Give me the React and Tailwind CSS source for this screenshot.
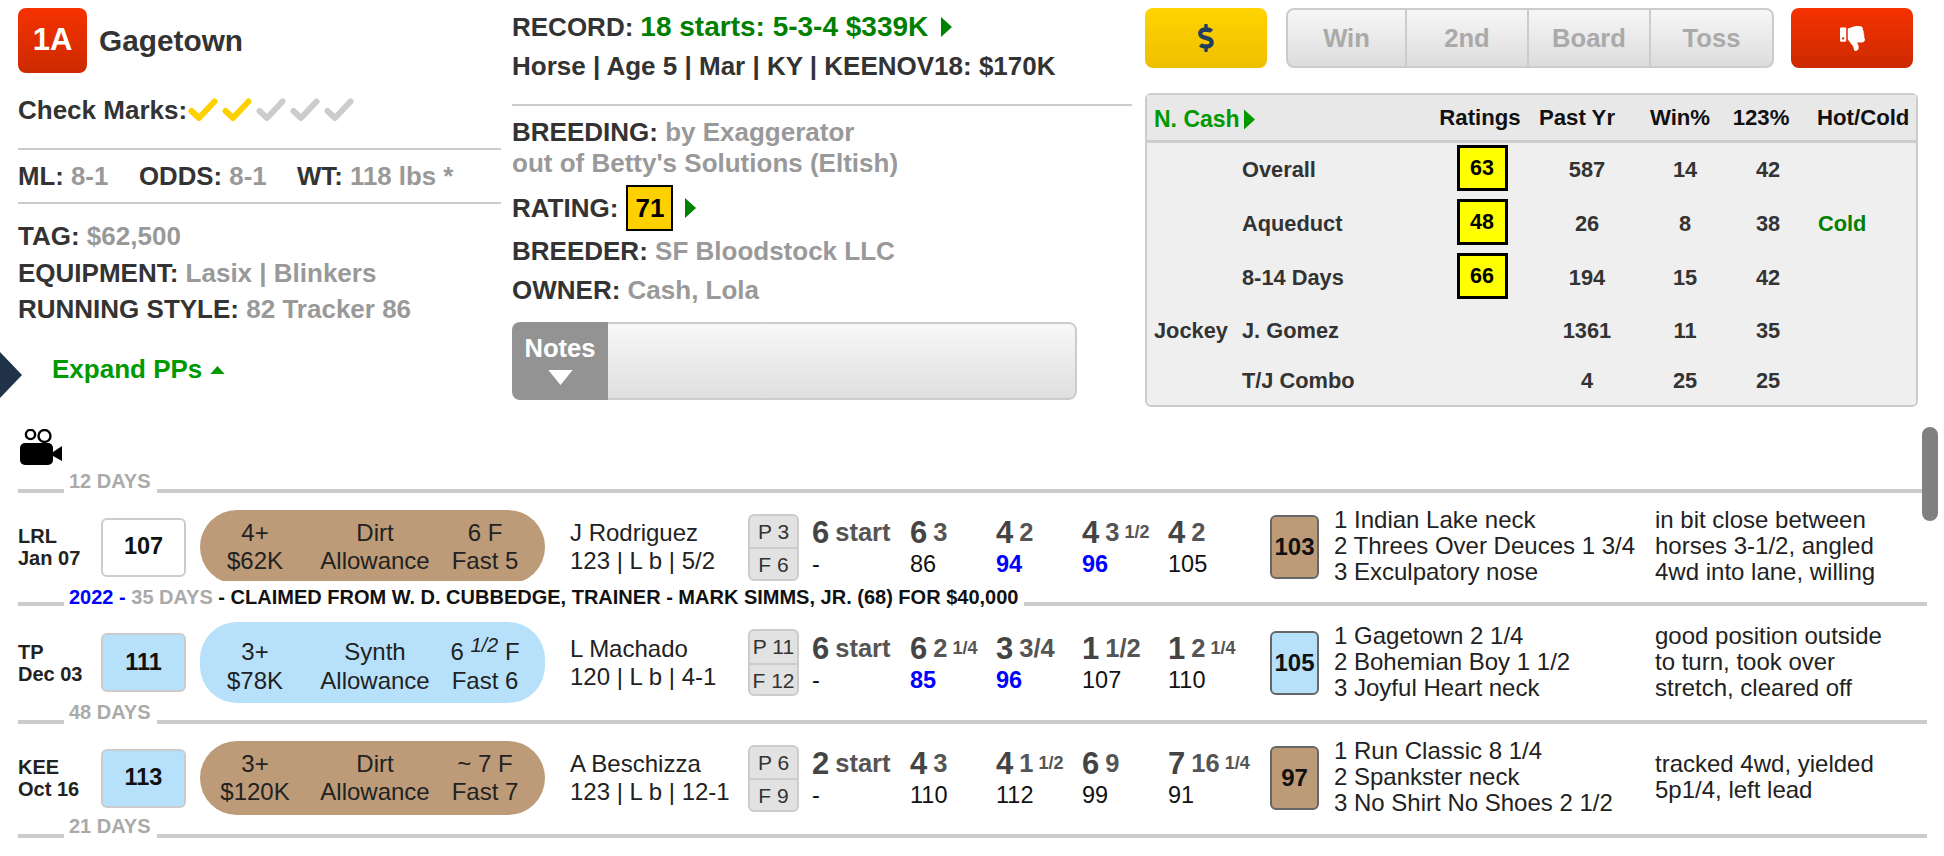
import React from "react";
import { FaDollarSign, FaThumbsDown } from "react-icons/fa";

const Check = ({ on }) => (
  <svg viewBox="0 0 30 24" className="w-[30px] h-[24px] -ml-[1px] mr-[5px]">
    <path d="M3.5 13 L11 20 L26.5 3.5" fill="none" stroke={on ? "#ffd000" : "#cccccc"} strokeWidth="6" strokeLinejoin="round" strokeLinecap="round" />
  </svg>
);

const Arrow = ({ className }) => (
  <svg viewBox="0 0 10 18" className={className}>
    <path d="M0 0 L10 9 L0 18 Z" fill="currentColor" />
  </svg>
);

const Label = ({ name, children }) => (
  <>
    <span className="text-[#333]">{name}:</span> <span className="text-[#999]">{children}</span>
  </>
);

const Separator = ({ children, h, low }) => (
  <div className={`flex items-end pl-[18px] pr-[17px] ${h}`}>
    <div className="w-[46px] h-[4px] bg-[#ccc]"></div>
    <div className={`ml-[5px] mr-[6px] leading-[24px] text-[20px] font-bold text-[#aaa] whitespace-nowrap ${low ? "-mb-[3px]" : ""}`}>
      {children}
    </div>
    <div className="flex-1 h-[4px] bg-[#ccc]"></div>
  </div>
);

const Call = ({ big, margin, frac, num, blue, w }) => (
  <div className={`${w} shrink-0`}>
    <div className="h-[34px] leading-[34px] whitespace-nowrap text-[#555] font-bold">
      <span className="text-[31px] text-[#444]">{big}</span>
      {margin && <span className="relative -top-[2px] text-[25.5px] ml-[6px]">{margin}</span>}
      {frac && <span className="relative -top-[5px] text-[18px] ml-[5px]">{frac}</span>}
    </div>
    <div className={`h-[28px] leading-[28px] text-[23.5px] ${blue ? "text-[#0000ff] font-bold" : "text-[#111]"}`}>{num}</div>
  </div>
);

const rows = [
  {
    outer: "h-[89px]", inner: "h-[108px]", track: "LRL", date: "Jan 07", speed: "107", speedBg: "bg-white",
    pill: "bg-[#bd9b78] h-[74px] [clip-path:inset(0_0_3px_0)]", age: "4+", purse: "$62K", surface: "Dirt", dist: "6 F", cond: "Fast 5",
    jockey: "J Rodriguez", info: "123 | L b | 5/2", p: "P 3", f: "F 6",
    calls: [
      { big: "6", margin: "start", num: "-" },
      { big: "6", margin: "3", num: "86" },
      { big: "4", margin: "2", num: "94", blue: true },
      { big: "4", margin: "3", frac: "1/2", num: "96", blue: true },
      { big: "4", margin: "2", num: "105" },
    ],
    beyer: "103", beyerBg: "bg-[#bd9b78]",
    finish: ["1 Indian Lake neck", "2 Threes Over Deuces 1 3/4", "3 Exculpatory nose"],
    comment: ["in bit close between", "horses 3-1/2, angled", "4wd into lane, willing"],
  },
  {
    outer: "h-[98px]", inner: "h-[113px]", track: "TP", date: "Dec 03", speed: "111", speedBg: "bg-[#b7e1fb]",
    pill: "bg-[#b7e1fb] h-[81px]", tall: true, age: "3+", purse: "$78K", surface: "Synth", cond: "Fast 6",
    jockey: "L Machado", info: "120 | L b | 4-1", p: "P 11", f: "F 12",
    calls: [
      { big: "6", margin: "start", num: "-" },
      { big: "6", margin: "2", frac: "1/4", num: "85", blue: true },
      { big: "3", margin: "3/4", num: "96", blue: true },
      { big: "1", margin: "1/2", num: "107" },
      { big: "1", margin: "2", frac: "1/4", num: "110" },
    ],
    beyer: "105", beyerBg: "bg-[#b7e1fb]",
    finish: ["1 Gagetown 2 1/4", "2 Bohemian Boy 1 1/2", "3 Joyful Heart neck"],
    comment: ["good position outside", "to turn, took over", "stretch, cleared off"],
  },
  {
    outer: "h-[94px]", inner: "h-[108px]", track: "KEE", date: "Oct 16", speed: "113", speedBg: "bg-[#b7e1fb]",
    pill: "bg-[#bd9b78] h-[74px]", age: "3+", purse: "$120K", surface: "Dirt", dist: "~ 7 F", cond: "Fast 7",
    jockey: "A Beschizza", info: "123 | L b | 12-1", p: "P 6", f: "F 9",
    calls: [
      { big: "2", margin: "start", num: "-" },
      { big: "4", margin: "3", num: "110" },
      { big: "4", margin: "1", frac: "1/2", num: "112" },
      { big: "6", margin: "9", num: "99" },
      { big: "7", margin: "16", frac: "1/4", num: "91" },
    ],
    beyer: "97", beyerBg: "bg-[#bd9b78]",
    finish: ["1 Run Classic 8 1/4", "2 Spankster neck", "3 No Shirt No Shoes 2 1/2"],
    comment: ["tracked 4wd, yielded", "5p1/4, left lead"],
  },
];

const callWidths = ["w-[98px]", "w-[86px]", "w-[86px]", "w-[86px]", "w-[102px]"];

const PastPerformance = ({ r }) => (
  <div className={r.outer}>
    <div className={`flex items-center pl-[18px] ${r.inner}`}>
      <div className="w-[83px] shrink-0 text-[20px] leading-[22px] font-bold text-[#222]">
        <div>{r.track}</div>
        <div>{r.date}</div>
      </div>
      <div className={`w-[85px] h-[59px] shrink-0 flex items-center justify-center rounded-md border-2 border-[#ccc] text-[23.5px] font-bold text-[#111] ${r.speedBg}`}>
        {r.speed}
      </div>
      <div className={`w-[345px] ml-[14px] shrink-0 rounded-[37px] flex items-center text-[24px] leading-[28px] text-[#222] text-center ${r.pill}`}>
        <div className="w-[110px] shrink-0">
          <div className={r.tall ? "h-[36px] pt-[7px]" : ""}>{r.age}</div>
          <div>{r.purse}</div>
        </div>
        <div className="w-[130px] shrink-0">
          <div className={r.tall ? "h-[36px] pt-[7px]" : ""}>{r.surface}</div>
          <div>Allowance</div>
        </div>
        <div className="w-[90px] shrink-0 whitespace-nowrap">
          {r.tall ? (
            <div className="h-[36px] pt-[7px]">
              6 <span className="relative -top-[8px] italic text-[20px]">1/2</span> F
            </div>
          ) : (
            <div>{r.dist}</div>
          )}
          <div>{r.cond}</div>
        </div>
      </div>
      <div className="w-[178px] ml-[25px] shrink-0 text-[24px] leading-[28px] text-[#222] whitespace-nowrap">
        <div>{r.jockey}</div>
        <div>{r.info}</div>
      </div>
      <div className="w-[51px] h-[67px] shrink-0 flex flex-col rounded-md border-2 border-[#ccc] bg-[#e2e2e2] text-[21px] text-[#333] text-center">
        <div className="flex-1 flex items-center justify-center border-b-2 border-[#ccc] whitespace-nowrap">{r.p}</div>
        <div className="flex-1 flex items-center justify-center whitespace-nowrap">{r.f}</div>
      </div>
      <div className="ml-[13px] flex shrink-0">
        {r.calls.map((c, i) => (
          <Call key={i} {...c} w={callWidths[i]} />
        ))}
      </div>
      <div className={`w-[49px] h-[64px] shrink-0 flex items-center justify-center rounded-md border-2 border-[#666] text-[24px] font-bold text-[#111] ${r.beyerBg}`}>
        {r.beyer}
      </div>
      <div className="w-[321px] ml-[15px] -mt-[2px] shrink-0 text-[24px] leading-[26px] text-[#222] whitespace-nowrap">
        {r.finish.map((t) => (
          <div key={t}>{t}</div>
        ))}
      </div>
      <div className="-mt-[2px] text-[24px] leading-[26px] text-[#222] whitespace-nowrap">
        {r.comment.map((t) => (
          <div key={t}>{t}</div>
        ))}
      </div>
    </div>
  </div>
);

const stats = [
  { group: "", name: "Overall", rating: "63", year: "587", win: "14", itm: "42", hot: "", h: "h-[54px]" },
  { group: "", name: "Aqueduct", rating: "48", year: "26", win: "8", itm: "38", hot: "Cold", h: "h-[54px]" },
  { group: "", name: "8-14 Days", rating: "66", year: "194", win: "15", itm: "42", hot: "", h: "h-[54px]" },
  { group: "Jockey", name: "J. Gomez", rating: "", year: "1361", win: "11", itm: "35", hot: "", h: "h-[52px]" },
  { group: "", name: "T/J Combo", rating: "", year: "4", win: "25", itm: "25", hot: "", h: "h-[48px]" },
];

const gridCols = "grid grid-cols-[95px_192px_96px_114px_82px_84px_1fr] items-center";

function App() {
  return (
    <div className="relative w-[1944px] h-[856px] overflow-hidden bg-white font-['Liberation_Sans',Arial,sans-serif]">
      {/* Top panel */}
      <div className="flex h-[423px] pl-[18px] pt-[8px] text-[26px] font-bold">
        {/* Left column */}
        <div className="w-[483px] shrink-0">
          <div className="flex items-center h-[65px]">
            <div className="w-[69px] h-[65px] rounded-lg bg-gradient-to-b from-[#f63200] to-[#cc2a00] flex items-center justify-center text-white text-[31px]">
              1A
            </div>
            <div className="ml-[12px] pt-[2px] text-[29.8px] text-[#333]">Gagetown</div>
          </div>
          <div className="flex items-center h-[36px] mt-[19px] leading-[36px] text-[#333]">
            <span className="mr-[2px]">Check Marks:</span>
            <Check on />
            <Check on />
            <Check />
            <Check />
            <Check />
          </div>
          <div className="h-[2px] mt-[20px] bg-[#ccc]"></div>
          <div className="flex h-[36px] mt-[8px] leading-[36px] whitespace-nowrap text-[25.8px]">
            <div className="w-[121px]"><Label name="ML">8-1</Label></div>
            <div className="w-[158px]"><Label name="ODDS">8-1</Label></div>
            <div><Label name="WT">118 lbs *</Label></div>
          </div>
          <div className="h-[2px] mt-[8px] bg-[#ccc]"></div>
          <div className="mt-[14px] leading-[36.5px] whitespace-nowrap">
            <div><Label name="TAG">$62,500</Label></div>
            <div><Label name="EQUIPMENT">Lasix | Blinkers</Label></div>
            <div><Label name="RUNNING STYLE">82 Tracker 86</Label></div>
          </div>
          <div className="flex items-center h-[36px] mt-[24px] pl-[34px] text-[#009900]">
            Expand PPs
            <svg viewBox="0 0 16 9" className="w-[15px] h-[8px] ml-[8px]">
              <path d="M0 9 L8 0 L16 9 Z" fill="currentColor" />
            </svg>
          </div>
        </div>

        {/* Middle column */}
        <div className="w-[620px] ml-[11px] shrink-0 -mt-[8px] pt-[9px]">
          <div className="flex items-center h-[36px] whitespace-nowrap">
            <span className="text-[#333]">RECORD:</span>
            <span className="ml-[7px] text-[28px] text-[#008000]">18 starts: 5-3-4 $339K</span>
            <Arrow className="w-[11px] h-[20px] ml-[13px] text-[#008000]" />
          </div>
          <div className="h-[36px] mt-[3px] leading-[36px] text-[#333] whitespace-nowrap">
            Horse | Age 5 | Mar | KY | KEENOV18: $170K
          </div>
          <div className="h-[2px] mt-[20px] bg-[#ccc]"></div>
          <div className="mt-[11px] leading-[31px] whitespace-nowrap">
            <div><Label name="BREEDING">by Exaggerator</Label></div>
            <div className="text-[#999]">out of Betty's Solutions (Eltish)</div>
          </div>
          <div className="flex items-center h-[46px] mt-[6px]">
            <span className="text-[#333]">RATING:</span>
            <div className="w-[47px] h-[46px] ml-[8px] border-2 border-black bg-[#ffd000] flex items-center justify-center text-black">71</div>
            <Arrow className="w-[11px] h-[20px] ml-[12px] text-[#008000]" />
          </div>
          <div className="mt-[1px] leading-[39px] whitespace-nowrap">
            <div><Label name="BREEDER">SF Bloodstock LLC</Label></div>
            <div><Label name="OWNER">Cash, Lola</Label></div>
          </div>
          <div className="flex w-[565px] h-[78px] mt-[12px] rounded-lg overflow-hidden">
            <div className="w-[96px] shrink-0 bg-[#939393] text-white flex flex-col items-center pt-[9px] text-[25.6px]">
              <div className="leading-[34px]">Notes</div>
              <svg viewBox="0 0 26 16" className="w-[25px] h-[15px] mt-[5px]">
                <path d="M0 0 L26 0 L13 16 Z" fill="#ffffff" />
              </svg>
            </div>
            <div className="flex-1 rounded-r-lg border-2 border-l-0 border-[#ccc] bg-gradient-to-b from-[#f8f8f8] to-[#dfdfdf]"></div>
          </div>
        </div>

        {/* Right column */}
        <div className="w-[773px] ml-[13px] shrink-0">
          <div className="flex h-[60px] text-[25.6px]">
            <div className="w-[122px] rounded-lg bg-gradient-to-b from-[#ffd400] to-[#eebf00] flex items-center justify-center text-[#233f5c]">
              <FaDollarSign size={28} />
            </div>
            <div className="flex w-[488px] ml-[19px] rounded-lg border-2 border-[#ccc] bg-gradient-to-b from-[#f7f7f7] to-[#dcdcdc] text-[#aaa]">
              <div className="w-[119px] flex items-center justify-center border-r-2 border-[#ccc]">Win</div>
              <div className="w-[122px] flex items-center justify-center border-r-2 border-[#ccc]">2nd</div>
              <div className="w-[122px] flex items-center justify-center border-r-2 border-[#ccc]">Board</div>
              <div className="flex-1 flex items-center justify-center">Toss</div>
            </div>
            <div className="w-[122px] ml-[17px] rounded-lg bg-gradient-to-b from-[#f63200] to-[#cc2a00] flex items-center justify-center text-white">
              <FaThumbsDown size={25} />
            </div>
          </div>
          <div className="w-[773px] h-[314px] mt-[25px] rounded-md border-2 border-[#ccc] bg-[#efefef] text-[21.8px] text-[#333] text-center">
            <div className={`${gridCols} h-[48px] border-b-[3px] border-[#ccc] bg-[#e8e8e8] text-[#111] text-[22.2px]`}>
              <div className="col-span-2 flex items-center pl-[7px] pt-[4px] text-[23px] text-[#009900]">
                N. Cash
                <Arrow className="w-[11px] h-[21px] ml-[4px]" />
              </div>
              <div className="pr-[4px]">Ratings</div>
              <div className="pr-[20px]">Past Yr</div>
              <div className="pr-[10px]">Win%</div>
              <div className="pr-[14px]">123%</div>
              <div className="text-left pl-[7px] whitespace-nowrap">Hot/Cold</div>
            </div>
            {stats.map((s) => (
              <div key={s.name} className={`${gridCols} ${s.h}`}>
                <div className="text-left pl-[7px]">{s.group}</div>
                <div className="text-left">{s.name}</div>
                <div className="flex justify-center">
                  {s.rating && (
                    <div className="w-[51px] h-[46px] -mt-[4px] border-[3px] border-black bg-[#ffff00] flex items-center justify-center text-[21.5px] text-black">
                      {s.rating}
                    </div>
                  )}
                </div>
                <div>{s.year}</div>
                <div>{s.win}</div>
                <div>{s.itm}</div>
                <div className="text-left pl-[8px] text-[#008000]">{s.hot}</div>
              </div>
            ))}
          </div>
        </div>
      </div>

      {/* Past performances */}
      <div className="h-[50px] pl-[20px]">
        <svg viewBox="0 0 42 36" className="w-[42px] h-[36px] relative top-[6px]">
          <circle cx="10.5" cy="5.5" r="4.6" fill="none" stroke="#000" strokeWidth="2.4" />
          <circle cx="24.5" cy="7" r="6" fill="none" stroke="#000" strokeWidth="2.4" />
          <rect x="0" y="14" width="33" height="22" rx="5" fill="#000" />
          <path d="M33 23 L42 17 L42 32 L33 27 Z" fill="#000" />
        </svg>
      </div>
      <Separator h="h-[20px]">12 DAYS</Separator>
      <PastPerformance r={rows[0]} />
      <Separator h="h-[24px]" low>
        <span className="text-[#0000ff]">2022 - </span>
        <span>35 DAYS</span>
        <span className="text-[#111]"> - CLAIMED FROM W. D. CUBBEDGE, TRAINER - MARK SIMMS, JR. (68) FOR $40,000</span>
      </Separator>
      <PastPerformance r={rows[1]} />
      <Separator h="h-[20px]">48 DAYS</Separator>
      <PastPerformance r={rows[2]} />
      <Separator h="h-[20px]">21 DAYS</Separator>

      {/* Scrollbar thumb */}
      <div className="absolute left-[1922px] top-[427px] w-[16px] h-[94px] rounded-full bg-[#808080]"></div>

      {/* Side drawer handle */}
      <svg viewBox="0 0 22 46" className="absolute left-0 top-[352px] w-[22px] h-[46px]">
        <path d="M0 0 L22 23 L0 46 Z" fill="#1f3247" />
      </svg>
    </div>
  );
}

export default App;
